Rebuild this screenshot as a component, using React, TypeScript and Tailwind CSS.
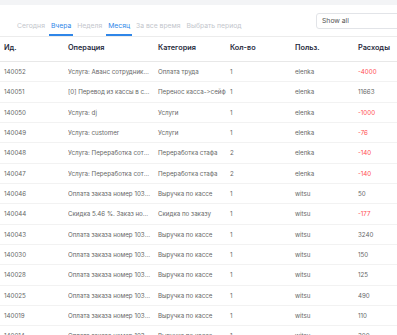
const tabs = [
  { label: "Сегодня", active: false, line: false },
  { label: "Вчера", active: true, line: true },
  { label: "Неделя", active: false, line: false },
  { label: "Месяц", active: true, line: true },
  { label: "За все время", active: false, line: false },
  { label: "Выбрать период", active: false, line: false },
]

const rows = [
  ["140052", "Услуга: Аванс сотруднику за декабрь", "Оплата труда", "1", "elenka", "-4000"],
  ["140051", "[0] Перевод из кассы в сейф", "Перенос касса->сейф", "1", "elenka", "11663"],
  ["140050", "Услуга: dj", "Услуги", "1", "elenka", "-1000"],
  ["140049", "Услуга: customer", "Услуги", "1", "elenka", "-76"],
  ["140048", "Услуга: Переработка сотрудников", "Переработка стафа", "2", "elenka", "-140"],
  ["140047", "Услуга: Переработка сотрудников", "Переработка стафа", "2", "elenka", "-140"],
  ["140046", "Оплата заказа номер 103456", "Выручка по кассе", "1", "witsu", "50"],
  ["140044", "Скидка 5.46 %. Заказ номер 103455", "Скидка по заказу", "1", "witsu", "-177"],
  ["140043", "Оплата заказа номер 103455", "Выручка по кассе", "1", "witsu", "3240"],
  ["140030", "Оплата заказа номер 103442", "Выручка по кассе", "1", "witsu", "150"],
  ["140028", "Оплата заказа номер 103440", "Выручка по кассе", "1", "witsu", "125"],
  ["140025", "Оплата заказа номер 103437", "Выручка по кассе", "1", "witsu", "490"],
  ["140019", "Оплата заказа номер 103431", "Выручка по кассе", "1", "witsu", "110"],
  ["140014", "Оплата заказа номер 103426", "Выручка по кассе", "1", "witsu", "300"],
]

const cols = "grid grid-cols-[64px_90px_72px_65px_63px_1fr] pl-[4px]"

export default function App() {
  return (
    <div className="w-[397px] h-[335px] overflow-hidden bg-white font-['Inter',sans-serif]">
      <div className="h-[5px] bg-[#f3f4f6]" />
      <div className="flex h-[32px] border-b border-[#ececec] pl-[17px]">
        <div className="flex gap-[6px] h-[31px]">
          {tabs.map((t) => (
            <div key={t.label} className="flex flex-col justify-end h-[31px]">
              <span
                className={`mb-[5px] text-[6.8px] leading-[7px] ${t.active ? "text-[#2f86e8]" : "text-[#c3c6cc]"}`}
              >
                {t.label}
              </span>
              <div className={`h-[2px] mx-[-2px] ${t.line ? "bg-[#2f86e8]" : "bg-transparent"}`} />
            </div>
          ))}
        </div>
        <div className="ml-auto mr-[-20px] mt-[8px] flex items-center w-[101px] h-[16px] rounded-[3px] border border-[#e2e4e8] pl-[5px] text-[6.8px] text-[#555]">
          Show all
        </div>
      </div>
      <div className={`${cols} h-[25px] pb-[2px] items-center border-b border-[#e8e8e8] text-[7.3px] font-semibold text-[#1f2a3c]`}>
        <div>Ид.</div>
        <div>Операция</div>
        <div>Категория</div>
        <div>Кол-во</div>
        <div>Польз.</div>
        <div>Расходы</div>
      </div>
      {rows.map((r) => (
        <div
          key={r[0]}
          className={`${cols} h-[20.33px] items-center border-b border-[#f2f2f2] text-[6.2px] text-[#666]`}
        >
          <div>{r[0]}</div>
          <div className="truncate pr-[7px]">{r[1]}</div>
          <div className="whitespace-nowrap [font-feature-settings:'calt'_0]">{r[2]}</div>
          <div>{r[3]}</div>
          <div>{r[4]}</div>
          <div className={r[5].startsWith("-") ? "text-[#ff4d4f]" : ""}>{r[5]}</div>
        </div>
      ))}
    </div>
  )
}
